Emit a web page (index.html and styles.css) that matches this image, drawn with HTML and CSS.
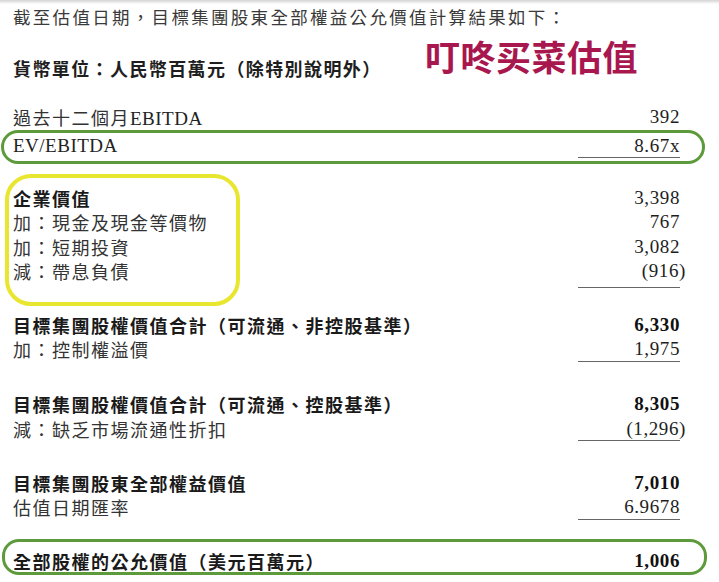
FILE: index.html
```html
<!DOCTYPE html>
<html lang="zh-Hant">
<head>
<meta charset="utf-8">
<link rel="stylesheet" href="styles.css">
</head>
<body>
<div class="page">
  <p class="intro">截至估值日期，目標集團股東全部權益公允價值計算結果如下：</p>
  <div class="header">
    <p class="unit">貨幣單位：人民幣百萬元（除特別說明外）</p>
    <h1 class="title" lang="zh-Hans">叮咚买菜估值</h1>
  </div>

  <div class="row first"><span class="label">過去十二個月<span class="latin">EBITDA</span></span><span class="num">392</span></div>
  <div class="row oval ev"><span class="label latin">EV/EBITDA</span><span class="num rule">8.67x</span></div>

  <div class="group ev-group">
    <div class="row"><span class="label bold">企業價值</span><span class="num">3,398</span></div>
    <div class="row"><span class="label">加：現金及現金等價物</span><span class="num">767</span></div>
    <div class="row"><span class="label">加：短期投資</span><span class="num">3,082</span></div>
    <div class="row"><span class="label">減：帶息負債</span><span class="num rule tall"><span class="neg">(916)</span></span></div>
  </div>

  <div class="group g2">
    <div class="row"><span class="label bold">目標集團股權價值合計（可流通、非控股基準）</span><span class="num bold">6,330</span></div>
    <div class="row"><span class="label">加：控制權溢價</span><span class="num rule">1,975</span></div>
  </div>

  <div class="group g3">
    <div class="row"><span class="label bold">目標集團股權價值合計（可流通、控股基準）</span><span class="num bold">8,305</span></div>
    <div class="row"><span class="label">減：缺乏市場流通性折扣</span><span class="num rule"><span class="neg">(1,296)</span></span></div>
  </div>

  <div class="group g4">
    <div class="row"><span class="label bold">目標集團股東全部權益價值</span><span class="num bold">7,010</span></div>
    <div class="row"><span class="label">估值日期匯率</span><span class="num rule">6.9678</span></div>
  </div>

  <div class="row oval final"><span class="label bold">全部股權的公允價值（美元百萬元）</span><span class="num bold">1,006</span></div>
</div>
</body>
</html>
```

FILE: styles.css
```css
* { box-sizing: border-box; }

html, body {
  margin: 0;
  padding: 0;
  background: #ffffff;
}

body {
  width: 719px;
  height: 582px;
  overflow: hidden;
  background: linear-gradient(to bottom, #d4d4d4 0px, #e8e8e8 2px, #ffffff 4px);
  font-family: "Noto Sans CJK TC", "Noto Sans CJK SC", sans-serif;
  color: #333;
}

.page {
  padding: 5px 39px 0 13px;
}

p, h1 { margin: 0; }

.intro {
  font-size: 17.5px;
  line-height: 24px;
  letter-spacing: 2.3px;
  color: #3a3a3a;
  white-space: nowrap;
}

.header {
  display: flex;
  align-items: flex-start;
  margin-top: 7px;
  height: 44px;
}

.unit {
  width: 412px;
  flex: none;
  padding-top: 20px;
  font-size: 18px;
  line-height: 24px;
  letter-spacing: 1.4px;
  font-weight: 700;
  color: #1e1e1e;
  white-space: nowrap;
}

.title {
  font-family: "Noto Sans CJK SC", sans-serif;
  font-size: 35px;
  line-height: 40px;
  font-weight: 700;
  color: #a8184f;
  letter-spacing: 0.5px;
  white-space: nowrap;
}

.row {
  display: grid;
  grid-template-columns: 1fr 102px;
  align-items: start;
  line-height: 24.5px;
}

.label {
  font-size: 18px;
  letter-spacing: 1.5px;
  color: #333;
  white-space: nowrap;
}

.label.bold {
  font-weight: 700;
  color: #1a1a1a;
}

.latin {
  font-family: "Liberation Serif", serif;
  font-size: 19px;
  letter-spacing: 0.5px;
  color: #222;
}

.num {
  font-family: "Liberation Serif", serif;
  font-size: 19px;
  letter-spacing: 0.6px;
  text-align: right;
  color: #1e1e1e;
}

.num.bold {
  font-weight: 700;
  color: #111;
}

.rule {
  box-shadow: inset 0 -1px 0 #666;
}

.rule.tall {
  padding-bottom: 4px;
}

.neg {
  margin-right: -6px;
}

.first {
  margin-top: 25.75px;
  line-height: 22px;
}

.oval {
  margin-left: -12px;
  margin-right: -25px;
  border: 3px solid #5d9a3c;
  border-radius: 17px;
  padding: 1px 22px 3px 9px;
}

.oval.ev {
  line-height: 23px;
}

.oval.ev .num {
  line-height: 23px;
  height: 24px;
}

.ev-group {
  position: relative;
  margin-top: 10px;
  padding-top: 11.75px;
  padding-bottom: 10.25px;
}

.ev-group::before {
  content: "";
  position: absolute;
  left: -8px;
  top: 0;
  width: 227px;
  height: 124px;
  border: 4px solid #e9e630;
  border-radius: 26px;
  pointer-events: none;
}

.g2 { margin-top: 14.75px; }
.g3 { margin-top: 30.5px; }
.g4 { margin-top: 29.5px; }

.final {
  margin-top: 19.75px;
  margin-left: -11px;
  margin-right: -27px;
  line-height: 20px;
  padding: 9px 24px 1px 8px;
}
```
